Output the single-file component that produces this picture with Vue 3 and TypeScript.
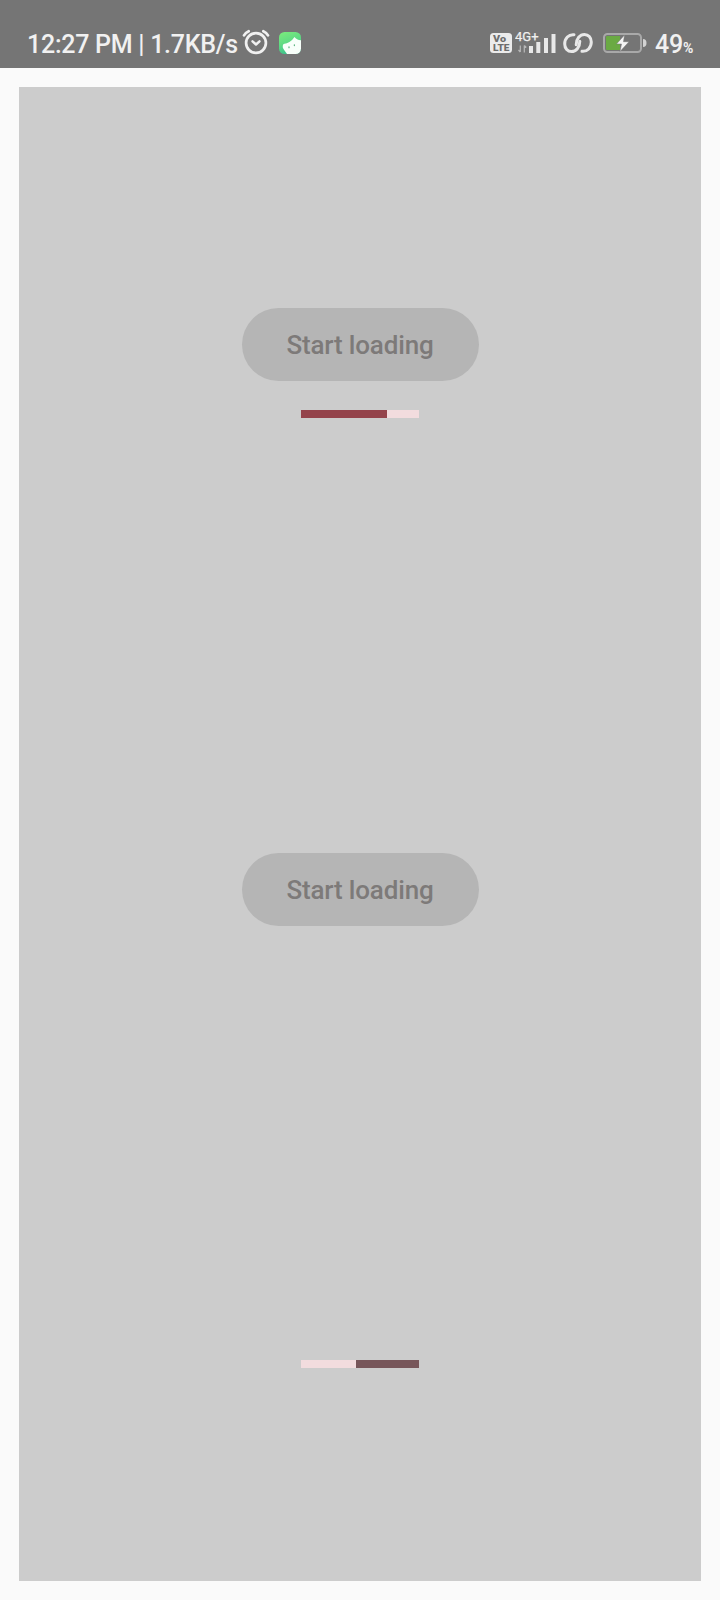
<script setup lang="ts">
interface Loader {
  value: number
  reversed: boolean
  fill: string
}

const label = 'Start loading'
const top: Loader = { value: 73, reversed: false, fill: '#94434b' }
const bottom: Loader = { value: 53, reversed: true, fill: '#77565a' }
</script>

<template>
  <div class="screen">
    <header class="status">
      <div class="group left">
        <span class="clock">12:27 PM | 1.7KB/s</span>
        <svg class="alarm" viewBox="0 0 28 26" width="28" height="26">
          <g fill="none" stroke="#f0f0f0" stroke-linecap="round" stroke-linejoin="round">
            <circle cx="14" cy="14" r="9.9" stroke-width="2.7" />
            <path d="M10.5 12.3 14 15.5 17.5 12.3" stroke-width="2.4" />
            <path d="M2 6.3Q3.5 3.6 6.7 2.2M21.3 2.2Q24.5 3.6 26 6.3" stroke-width="2.7" />
          </g>
        </svg>
        <svg class="app" viewBox="0 0 22 22" width="22" height="22">
          <defs>
            <linearGradient id="leaf" x1="0" y1="0" x2="0.4" y2="1">
              <stop offset="0" stop-color="#7cec7c" />
              <stop offset="0.5" stop-color="#62dc83" />
              <stop offset="1" stop-color="#3cc08c" />
            </linearGradient>
            <clipPath id="tile"><rect width="22" height="22" rx="5.5" /></clipPath>
          </defs>
          <g clip-path="url(#tile)">
            <rect width="22" height="22" fill="url(#leaf)" />
            <path d="M4.5 12Q11.5 11 15.5 5Q17.5 8 22 8.3V22H8Q6.5 19.5 5.5 18.5Q2.5 15 4.5 12Z" fill="#f8fffa" />
            <path d="M10 15v.7M15.4 12.8v.7" stroke="#62b685" stroke-width="1.3" stroke-linecap="round" />
          </g>
        </svg>
      </div>
      <div class="group right">
        <svg viewBox="0 0 22 20" width="22" height="20">
          <rect width="22" height="20" rx="3.5" fill="#ebebeb" />
          <g fill="#6d6d6d" font-family="Roboto, sans-serif" font-weight="900">
            <text x="3" y="9.2" font-size="9" textLength="13" lengthAdjust="spacingAndGlyphs">Vo</text>
            <text x="3" y="17.8" font-size="9" textLength="16.5" lengthAdjust="spacingAndGlyphs">LTE</text>
          </g>
        </svg>
        <svg class="signal" viewBox="0 0 42 24" width="42" height="24">
          <text x="0" y="11.3" font-size="13" font-family="Roboto, sans-serif" fill="#f0f0f0" stroke="#f0f0f0" stroke-width=".25" textLength="23.5" lengthAdjust="spacingAndGlyphs">4G+</text>
          <path d="M14 16h4v7h-4zM21.3 12h4v11h-4zM29 8h4v15h-4zM36.5 4h4v19h-4z" fill="#e8e8e8" />
          <path d="M5.3 15.5v6.5M3.5 20l1.8 2M9.3 22.5v-7M9.3 15.5l2 2" fill="none" stroke="#b8b8b8" stroke-width="1.2" />
        </svg>
        <svg class="link" viewBox="0 0 30 22" width="30" height="22">
          <g fill="none" stroke="#e8e8e8" stroke-width="3" stroke-linecap="round">
            <path d="M11 2.7C5.7 2.1 1.7 6.5 1.7 12C1.7 16.4 4.7 19.6 8.5 19.6C13 19.6 16.8 15.5 16.8 9.3" />
            <path d="M19 19.3C24.3 19.9 28.3 15.5 28.3 10C28.3 5.6 25.3 2.4 21.5 2.4C17 2.4 13.2 6.5 13.2 12.7" />
          </g>
        </svg>
        <svg class="battery" viewBox="0 0 44 20" width="44" height="20">
          <rect x="1" y="1" width="37" height="18" rx="3.5" fill="none" stroke="#a9a9a9" stroke-width="2" />
          <path d="M4 3h13v14H4q-1 0-1-1V4q0-1 1-1Z" fill="#6aaa43" />
          <path d="M40 6q3.5 0 3.5 4t-3.5 4Z" fill="#d2d2d2" />
          <path d="M21.5 2 13.5 11h5L17 18.5 26 8.7h-5.5Z" fill="#f5f5f5" stroke="#777" stroke-width=".5" />
        </svg>
        <span class="percent">49<small>%</small></span>
      </div>
    </header>

    <main class="panel">
      <section class="half first">
        <button class="button" type="button" disabled>{{ label }}</button>
        <div class="track" :class="{ reversed: top.reversed }">
          <div class="fill" :style="{ width: top.value + '%', background: top.fill }"></div>
        </div>
      </section>
      <section class="half second">
        <button class="button" type="button" disabled>{{ label }}</button>
        <div class="track" :class="{ reversed: bottom.reversed }">
          <div class="fill" :style="{ width: bottom.value + '%', background: bottom.fill }"></div>
        </div>
      </section>
    </main>
  </div>
</template>

<style>
body {
  margin: 0;
  background: #fafafa;
}
</style>

<style scoped>
.screen {
  box-sizing: border-box;
  width: 720px;
  height: 1600px;
  display: flex;
  flex-direction: column;
  background: #fafafa;
  font-family: Roboto, sans-serif;
}
.status {
  box-sizing: border-box;
  height: 68px;
  flex: none;
  display: flex;
  justify-content: space-between;
  padding: 18px 26px 0 27px;
  background: #757575;
  color: #f1f1f1;
}
.group {
  display: flex;
  align-items: center;
  height: 50px;
}
svg {
  display: block;
  flex: none;
}
.clock {
  width: 214px;
  font-size: 25px;
  font-weight: 500;
  line-height: 30px;
  letter-spacing: -0.27px;
  white-space: nowrap;
  margin-top: 4px;
}
.alarm {
  margin: 0 9px 2px 1px;
}
.app {
  margin-bottom: 1px;
}
.signal {
  margin: 0 7px 3px 3px;
}
.link {
  margin: 0 11px 0 -1px;
}
.battery {
  margin: 0 0 1px -1px;
}
.percent {
  width: 39px;
  margin: 6px 0 0 8px;
  font-size: 25px;
  font-weight: 500;
  line-height: 30px;
  letter-spacing: -0.2px;
  white-space: nowrap;
}
.percent small {
  font-size: 14px;
  font-weight: 700;
}
.panel {
  flex: 1;
  display: flex;
  flex-direction: column;
  margin: 19px 19px 19px;
  background: #cccccc;
}
.half {
  display: flex;
  flex-direction: column;
  align-items: center;
}
.first {
  height: 545px;
  padding-top: 221px;
  box-sizing: border-box;
}
.second {
  flex: 1;
  justify-content: space-between;
  padding: 221px 0 213px;
}
.button {
  width: 237px;
  height: 73px;
  padding: 1px 0 0;
  border: 0;
  border-radius: 37px;
  background: #b5b5b5;
  color: #7d7a79;
  font: 500 26px/72px Roboto, sans-serif;
  letter-spacing: -0.16px;
}
.track {
  display: flex;
  width: 118px;
  height: 8px;
  background: #f2dcde;
}
.first .track {
  margin-top: 29px;
}
.reversed {
  justify-content: flex-end;
}
.fill {
  height: 100%;
}
</style>
